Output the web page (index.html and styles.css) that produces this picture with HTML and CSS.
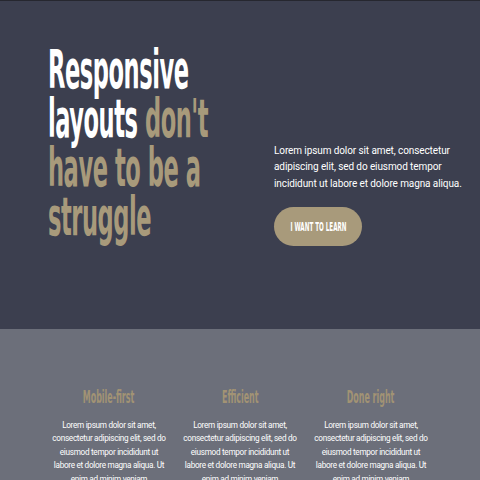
FILE: index.html
```html
<!DOCTYPE html>
<html lang="en">
<head>
<meta charset="utf-8">
<title>Responsive layouts</title>
<link rel="stylesheet" href="styles.css">
</head>
<body>
<header class="hero">
  <div class="hero-inner">
    <div class="hero-title-wrap">
      <h1 class="hero-title">Responsive<br>layouts <span class="accent">don't</span><br><span class="accent">have to be a</span><br><span class="accent">struggle</span></h1>
    </div>
    <div class="hero-side">
      <p class="hero-text">Lorem ipsum dolor sit amet, consectetur adipiscing elit, sed do eiusmod tempor incididunt ut labore et dolore magna aliqua.</p>
      <a class="btn" href="#"><span class="btn-label">I want to learn</span></a>
    </div>
  </div>
</header>
<section class="features">
  <div class="feature">
    <h2 class="feature-title"><span>Mobile-first</span></h2>
    <p class="feature-text">Lorem ipsum dolor sit amet, consectetur adipiscing elit, sed do eiusmod tempor incididunt ut labore et dolore magna aliqua. Ut enim ad minim veniam</p>
  </div>
  <div class="feature">
    <h2 class="feature-title"><span>Efficient</span></h2>
    <p class="feature-text">Lorem ipsum dolor sit amet, consectetur adipiscing elit, sed do eiusmod tempor incididunt ut labore et dolore magna aliqua. Ut enim ad minim veniam</p>
  </div>
  <div class="feature">
    <h2 class="feature-title"><span>Done right</span></h2>
    <p class="feature-text">Lorem ipsum dolor sit amet, consectetur adipiscing elit, sed do eiusmod tempor incididunt ut labore et dolore magna aliqua. Ut enim ad minim veniam</p>
  </div>
</section>
</body>
</html>
```

FILE: styles.css
```css
html, body {
  margin: 0;
  padding: 0;
}
body {
  background: #6c6f7a;
  font-family: Roboto, "Open Sans", sans-serif;
  overflow: hidden;
}
.hero {
  background: #3c3f4f;
  height: 329px;
  border-top: 1px solid #26272f;
  box-sizing: border-box;
}
.hero-inner {
  display: flex;
  align-items: flex-end;
  padding: 0 0 83px 48px;
  height: 100%;
  box-sizing: border-box;
}
.hero-title-wrap {
  width: 226px;
  flex: none;
  margin-bottom: 5px;
}
.hero-title {
  margin: 0;
  font-family: "DejaVu Sans Condensed", "DejaVu Sans", sans-serif;
  font-weight: bold;
  font-size: 54px;
  line-height: 49px;
  letter-spacing: -1px;
  color: #ffffff;
  white-space: nowrap;
  transform: scaleX(0.465);
  transform-origin: left bottom;
}
.accent {
  color: #a89a7b;
}
.hero-text {
  margin: 0 0 15px;
  width: 192px;
  font-size: 10px;
  line-height: 16.5px;
  color: #ffffff;
  letter-spacing: -0.1px;
}
.btn {
  display: flex;
  align-items: center;
  justify-content: center;
  width: 88px;
  height: 39px;
  border-radius: 20px;
  background: #a89a7b;
  text-decoration: none;
}
.btn-label {
  display: inline-block;
  font-family: "DejaVu Sans Condensed", "DejaVu Sans", sans-serif;
  font-weight: bold;
  font-size: 13px;
  color: #ffffff;
  text-transform: uppercase;
  transform: scaleX(0.48);
  white-space: nowrap;
}
.features {
  display: grid;
  grid-template-columns: repeat(3, 117px);
  justify-content: center;
  column-gap: 14px;
  padding: 57px 0 0;
}
.feature {
  text-align: center;
}
.feature-title {
  margin: 0 0 11px;
  font-family: "DejaVu Sans Condensed", "DejaVu Sans", sans-serif;
  font-weight: bold;
  font-size: 18px;
  line-height: 22px;
  color: #a29374;
}
.feature-title span {
  display: inline-block;
  transform: scaleX(0.49);
  white-space: nowrap;
}
.feature-text {
  margin: 0;
  font-size: 8.2px;
  line-height: 13.4px;
  letter-spacing: -0.3px;
  color: #ffffff;
}
```
